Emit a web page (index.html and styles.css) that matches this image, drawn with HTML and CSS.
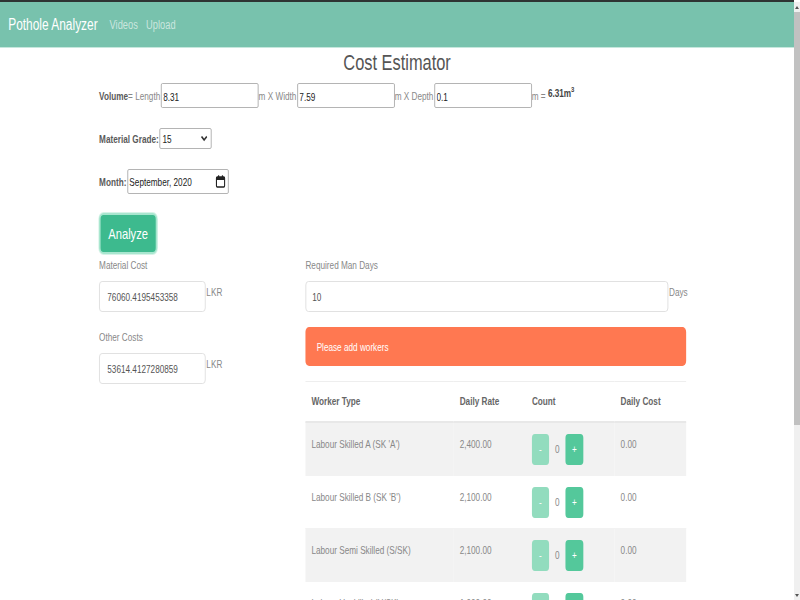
FILE: index.html
```html
<!DOCTYPE html>
<html lang="en">
<head>
<meta charset="utf-8">
<title>Pothole Analyzer - Cost Estimator</title>
<link rel="stylesheet" href="styles.css">
</head>
<body>
<div class="viewport">
<div class="page">
<div class="topline"></div>
<nav class="navbar">
  <span class="brand">Pothole Analyzer</span>
  <span class="nav-link">Videos</span>
  <span class="nav-link">Upload</span>
</nav>
<main class="container">
  <h1 class="title">Cost Estimator</h1>

  <div class="vol-row">
    <b class="lbl-bold">Volume</b><span>= Length</span>
    <input class="plain-input" type="text" value="8.31">
    <span>m X Width</span>
    <input class="plain-input" type="text" value="7.59">
    <span>m X Depth</span>
    <input class="plain-input" type="text" value="0.1">
    <span>m =</span><b class="result">6.31m<sup>3</sup></b>
  </div>

  <div class="field-row">
    <b class="lbl-bold">Material Grade:</b>
    <div class="select-box"><span>15</span>
      <svg width="10" height="7" viewBox="0 0 10 7"><path d="M1.5 1.5 L5 5 L8.5 1.5" fill="none" stroke="#333" stroke-width="1.8"/></svg>
    </div>
  </div>

  <div class="field-row month-row">
    <b class="lbl-bold">Month:</b>
    <div class="date-box"><span>September, 2020</span>
      <svg width="14" height="13" viewBox="0 0 14 13"><rect x="1.5" y="2" width="11" height="10" rx="1.2" fill="none" stroke="#222" stroke-width="1.5"/><rect x="1.5" y="2" width="11" height="3" fill="#222"/><rect x="3.6" y="0.3" width="1.6" height="2.6" fill="#222"/><rect x="8.8" y="0.3" width="1.6" height="2.6" fill="#222"/></svg>
    </div>
  </div>

  <button class="btn-analyze" type="button">Analyze</button>

  <div class="cols">
    <div class="col-left">
      <label class="form-label">Material Cost</label>
      <div class="input-line">
        <input class="form-control small" type="text" value="76060.4195453358">
        <span class="unit">LKR</span>
      </div>
      <label class="form-label gap">Other Costs</label>
      <div class="input-line">
        <input class="form-control small" type="text" value="53614.4127280859">
        <span class="unit">LKR</span>
      </div>
    </div>
    <div class="col-right">
      <label class="form-label">Required Man Days</label>
      <div class="input-line">
        <input class="form-control wide" type="text" value="10">
        <span class="unit">Days</span>
      </div>
      <div class="alert">Please add workers</div>
      <table class="table">
        <thead>
          <tr><th class="c1">Worker Type</th><th class="c2">Daily Rate</th><th class="c3">Count</th><th class="c4">Daily Cost</th></tr>
        </thead>
        <tbody>
          <tr class="odd"><td>Labour Skilled A (SK 'A')</td><td>2,400.00</td><td><div class="counter"><button class="btn-minus" type="button">-</button><span class="cnt">0</span><button class="btn-plus" type="button">+</button></div></td><td>0.00</td></tr>
          <tr><td>Labour Skilled B (SK 'B')</td><td>2,100.00</td><td><div class="counter"><button class="btn-minus" type="button">-</button><span class="cnt">0</span><button class="btn-plus" type="button">+</button></div></td><td>0.00</td></tr>
          <tr class="odd"><td>Labour Semi Skilled (S/SK)</td><td>2,100.00</td><td><div class="counter"><button class="btn-minus" type="button">-</button><span class="cnt">0</span><button class="btn-plus" type="button">+</button></div></td><td>0.00</td></tr>
          <tr><td>Labour Unskilled (U/SK)</td><td>1,900.00</td><td><div class="counter"><button class="btn-minus" type="button">-</button><span class="cnt">0</span><button class="btn-plus" type="button">+</button></div></td><td>0.00</td></tr>
        </tbody>
      </table>
    </div>
  </div>
</main>
</div>
</div>
<div class="scrollbar">
  <div class="sb-arrow up"></div>
  <div class="sb-thumb"></div>
  <div class="sb-track"></div>
  <div class="sb-arrow down"></div>
</div>
</body>
</html>
```
FILE: styles.css
```css
html, body {
  margin: 0;
  padding: 0;
  height: 100%;
  overflow: hidden;
}
body {
  font-family: "Liberation Sans", Arial, sans-serif;
  font-size: 11px;
  color: #888;
  background: #fff;
}
.viewport {
  width: 794px;
  height: 600px;
  overflow: hidden;
}
/* the captured screen is horizontally compressed */
.page {
  width: 1066px;
  transform: scaleX(0.745);
  transform-origin: 0 0;
}
.topline {
  height: 2px;
  background: #2e3433;
}
.navbar {
  height: 45px;
  background: #78c2ad;
  border-bottom: 1px solid #c6e7dd;
  display: flex;
  align-items: center;
  padding-left: 11px;
}
.brand {
  color: #fff;
  font-size: 16px;
  margin-right: 16px;
}
.nav-link {
  color: rgba(255,255,255,0.62);
  font-size: 12.5px;
  margin-right: 11px;
}
.container {
  margin-left: 133px;
  width: 797px;
}
.title {
  margin: 0;
  padding-top: 1px;
  font-size: 22px;
  line-height: 27px;
  font-weight: normal;
  color: #555;
  text-align: center;
  width: 800px;
}
.vol-row {
  margin-top: 7px;
  display: flex;
  align-items: center;
  height: 25px;
  white-space: nowrap;
}
.lbl-bold {
  color: #5a5a5a;
  font-weight: bold;
}
.plain-input {
  box-sizing: border-box;
  width: 131px;
  height: 25px;
  padding: 2px 2px 0;
  border: 1px solid #a9a9a9;
  border-radius: 2px;
  font-family: inherit;
  font-size: 11px;
  color: #222;
  margin: 0;
  background: #fff;
}
.vol-row span {
  margin-right: 1px;
}
.result {
  color: #444;
  margin-left: 2px;
  align-self: flex-start;
  margin-top: 4px;
}
.result sup {
  font-size: 8px;
  line-height: 0;
}
.field-row {
  display: flex;
  align-items: center;
  margin-top: 20px;
  white-space: nowrap;
}
.select-box {
  box-sizing: border-box;
  width: 70px;
  height: 21px;
  border: 1px solid #a9a9a9;
  border-radius: 2px;
  display: flex;
  align-items: center;
  justify-content: space-between;
  padding: 0 4px 0 3px;
  color: #222;
  margin-left: 1px;
}
.date-box {
  box-sizing: border-box;
  width: 136px;
  height: 25px;
  border: 1px solid #a9a9a9;
  border-radius: 2px;
  display: flex;
  align-items: center;
  justify-content: space-between;
  padding: 0 3px 0 2px;
  color: #222;
  margin-left: 1px;
}
.btn-analyze {
  margin-top: 19px;
  display: block;
  width: 78px;
  height: 41px;
  background: #3dba8e;
  border: 2px solid #a8e6cf;
  border-radius: 6px;
  color: #fff;
  font-family: inherit;
  font-size: 15px;
  padding: 0;
  box-shadow: 0 0 0 1px #d7f3e8;
}
.cols {
  display: flex;
  margin-top: 4px;
}
.col-left {
  width: 277px;
  flex: none;
  display: flex;
  flex-direction: column;
}
.col-right {
  width: 520px;
  flex: none;
  display: flex;
  flex-direction: column;
}
.form-label {
  display: block;
  line-height: 14px;
  height: 14px;
  margin-bottom: 9px;
  color: #888;
}
.form-label.gap {
  margin-top: 18px;
}
.input-line {
  display: flex;
  align-items: flex-start;
  white-space: nowrap;
}
.form-control {
  box-sizing: border-box;
  height: 31px;
  border: 1px solid #dcdcdc;
  border-radius: 4px;
  padding: 0 10px;
  font-family: inherit;
  font-size: 11px;
  color: #555;
  background: #fff;
  margin: 0;
}
.form-control.small {
  width: 143px;
}
.form-control.wide {
  width: 487px;
  padding-left: 8px;
}
.unit {
  color: #888;
  margin-top: 5px;
  margin-left: 1px;
}
.alert {
  margin-top: 15px;
  width: 511px;
  height: 39px;
  box-sizing: border-box;
  background: #ff7851;
  border-radius: 5px;
  color: #fff;
  display: flex;
  align-items: center;
  padding-left: 15px;
}
.table {
  margin-top: 15px;
  width: 511px;
  border-collapse: collapse;
  table-layout: fixed;
}
.table th {
  text-align: left;
  font-weight: bold;
  color: #666;
  height: 40px;
  padding: 0 8px;
  border-top: 1px solid #eee;
  border-bottom: 2px solid #e8e8e8;
  box-sizing: border-box;
}
.table th.c1 { width: 199px; }
.table th.c2 { width: 97px; }
.table th.c3 { width: 119px; }
.table th.c4 { width: 96px; }
.table td {
  vertical-align: top;
  padding: 11px 8px 10px 8px;
  line-height: 20px;
  color: #888;
  border-top: 1px solid #f2f2f2;
  white-space: nowrap;
}
.table tr.odd td {
  background: #f2f2f2;
}
.counter {
  display: flex;
  align-items: center;
  gap: 7px;
}
.counter button {
  width: 23px;
  height: 31px;
  border: none;
  border-radius: 4px;
  color: #fff;
  font-family: inherit;
  font-size: 11px;
  padding: 0;
}
.btn-minus {
  background: #92dcbe;
}
.counter .btn-plus {
  background: #54c89b;
  width: 24px;
}
.cnt {
  color: #888;
  width: 8px;
  text-align: center;
}
.scrollbar {
  position: fixed;
  right: 0;
  top: 2px;
  bottom: 0;
  width: 6px;
  background: #f0f0f0;
  display: flex;
  flex-direction: column;
}
.sb-arrow {
  height: 10px;
  display: flex;
  justify-content: center;
  align-items: center;
}
.sb-arrow.up::before {
  content: "";
  border-left: 2px solid transparent;
  border-right: 2px solid transparent;
  border-bottom: 3px solid #555;
}
.sb-arrow.down::before {
  content: "";
  border-left: 2px solid transparent;
  border-right: 2px solid transparent;
  border-top: 3px solid #555;
}
.sb-thumb {
  height: 413px;
  background: #c1c1c1;
}
.sb-track {
  flex: 1;
}
```
